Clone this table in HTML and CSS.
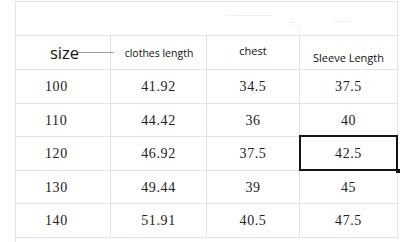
FILE: index.html
```html
<!DOCTYPE html>
<html>
<head>
<meta charset="utf-8">
<link rel="stylesheet" href="styles.css">
</head>
<body>
<div class="sheet">
  <div class="cell top"><span class="ghost g1"></span><span class="ghost g2"></span><span class="ghost g3"></span><span class="ghost g4"></span><span class="ghost g5"></span></div>
  <div class="cell head size">size<span class="leader"></span></div>
  <div class="cell head small">clothes length</div>
  <div class="cell head mid">chest</div>
  <div class="cell head low">Sleeve Length</div>

  <div class="cell num first">100</div><div class="cell num">41.92</div><div class="cell num">34.5</div><div class="cell num">37.5</div>
  <div class="cell num first">110</div><div class="cell num">44.42</div><div class="cell num">36</div><div class="cell num">40</div>
  <div class="cell num first">120</div><div class="cell num">46.92</div><div class="cell num">37.5</div><div class="cell num selected">42.5</div>
  <div class="cell num first">130</div><div class="cell num">49.44</div><div class="cell num">39</div><div class="cell num">45</div>
  <div class="cell num first">140</div><div class="cell num">51.91</div><div class="cell num">40.5</div><div class="cell num">47.5</div>
</div>
</body>
</html>
```
FILE: styles.css
```css
html, body {
  margin: 0;
  padding: 0;
  background: #fff;
}
body {
  padding: 1px 0 0 15px;
  height: 241px;
  overflow: hidden;
}
.sheet {
  display: grid;
  grid-template-columns: 95px 96px 93px 98px;
  grid-template-rows: 34px 34px 34px 33px 34px 33px 34px;
  border-top: 1px solid #dfe3ef;
  border-left: 1px solid #dfe3ef;
  width: max-content;
  position: relative;
}
.sheet::after {
  content: "";
  position: absolute;
  left: -1px;
  top: 100%;
  width: 1px;
  height: 10px;
  background: #dfe3ef;
}
.cell {
  box-sizing: border-box;
  border-right: 1px solid #dfe3ef;
  border-bottom: 1px solid #dfe3ef;
  display: flex;
  align-items: center;
  justify-content: center;
  position: relative;
}
.top {
  grid-column: 1 / span 4;
}
.ghost {
  position: absolute;
  background: #eef0f5;
}
.g1 { left: 210px; top: 13px; width: 46px; height: 1px; }
.g2 { left: 272px; top: 20px; width: 7px; height: 1px; }
.g3 { left: 275px; top: 17px; width: 1px; height: 7px; }
.g4 { left: 283px; top: 24px; width: 1px; height: 12px; }
.g5 { left: 318px; top: 19px; width: 17px; height: 1px; }
.head {
  font-family: "Open Sans", "Noto Sans", sans-serif;
  color: #111;
}
.size {
  font-size: 16.5px;
  justify-content: flex-start;
  padding-left: 34px;
  padding-bottom: 1px;
}
.leader {
  position: absolute;
  left: 62px;
  top: 16px;
  width: 36px;
  height: 1px;
  background: #9aa0a8;
}
.small {
  font-size: 10.5px;
  padding-left: 1px;
}
.mid {
  font-size: 11px;
  padding-bottom: 4px;
}
.low {
  font-size: 11px;
  padding-top: 10px;
}
.num {
  font-family: "Liberation Serif", "DejaVu Serif", serif;
  font-size: 14px;
  letter-spacing: 0.6px;
  color: #222;
  padding-top: 1px;
}
.first {
  justify-content: flex-start;
  padding-left: 29px;
}
.selected::after {
  content: "";
  position: absolute;
  left: -1px;
  top: -2px;
  right: -1px;
  bottom: -1px;
  border: 2px solid #141414;
}
.selected::before {
  content: "";
  position: absolute;
  right: -3px;
  bottom: -3px;
  width: 4px;
  height: 4px;
  background: #141414;
  z-index: 1;
}
```
